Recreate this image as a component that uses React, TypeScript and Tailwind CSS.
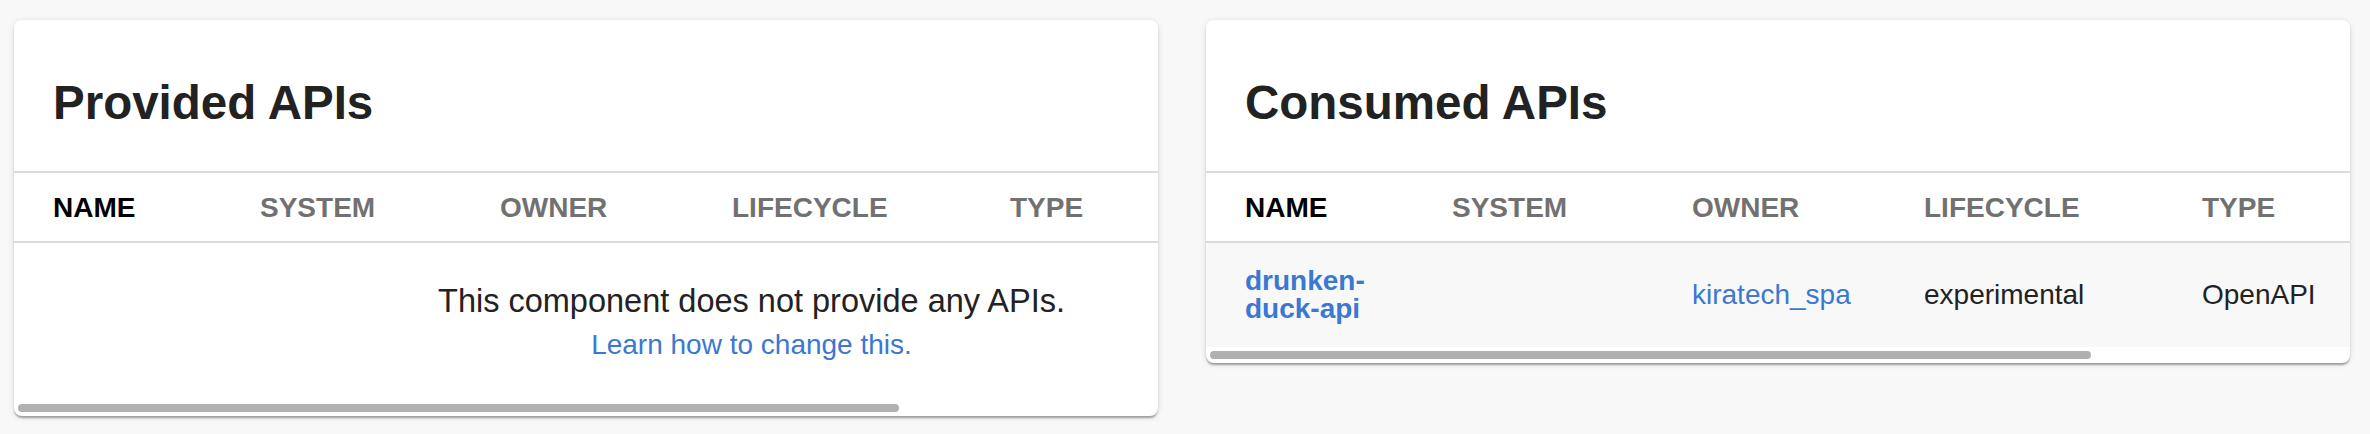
import React from 'react';

interface ApiRow {
  name: string;
  system: string;
  owner: string;
  lifecycle: string;
  type: string;
}

const columns = ['NAME', 'SYSTEM', 'OWNER', 'LIFECYCLE', 'TYPE'];

// column tracks sized so the table overflows the card, like the real scroll view
const gridCols = 'grid grid-cols-[207px_240px_232px_278px_518px]';

const HeaderRow: React.FC = () => (
  <div className={`${gridCols} border-y-2 border-[#dadada]`}>
    {columns.map((col, i) => (
      <div
        key={col}
        className={`pl-[39px] pt-[21px] pb-[19px] text-[28px] leading-[28px] font-bold ${
          i === 0 ? 'text-black' : 'text-[#717171]'
        }`}
      >
        {col}
      </div>
    ))}
  </div>
);

const Scrollbar: React.FC = () => (
  <div className="px-[4px] pt-[4px] pb-[4px]">
    <div className="h-[8px] w-[881px] rounded-full bg-[#b0b0b0]" />
  </div>
);

const ApiCard: React.FC<{ title: string; rows: ApiRow[]; emptyText: string }> = ({
  title,
  rows,
  emptyText,
}) => (
  <div className="w-[1144px] shrink-0 overflow-hidden rounded-[8px] bg-white shadow-[0_3px_2px_-1px_rgba(0,0,0,0.2),0_2px_2px_0_rgba(0,0,0,0.14),0_1px_6px_0_rgba(0,0,0,0.12)]">
    <div className="pl-[39px] pt-[59px] pb-[45px]">
      <h2 className="text-[47.5px] leading-[47px] font-bold text-[#222222]">{title}</h2>
    </div>
    <div className="overflow-hidden">
      <div className="w-[1475px]">
        <HeaderRow />
        {rows.length === 0 ? (
          <div className="flex flex-col items-center pt-[42px] pb-[41px]">
            <p className="text-[32.5px] leading-[33px] text-[#222222]">{emptyText}</p>
            <a className="mt-[13px] text-[28px] leading-[28px] text-[#3a78d2]">
              Learn how to change this.
            </a>
          </div>
        ) : (
          rows.map((row) => (
            <div key={row.name} className={`${gridCols} items-center bg-[#f8f8f8] text-[28px] leading-[28px]`}>
              <div className="py-[24px] pl-[39px] pr-[39px]">
                <a className="font-bold text-[#3a78d2] break-words">{row.name}</a>
              </div>
              <div className="pl-[39px] text-[#222222]">{row.system}</div>
              <div className="pl-[39px]">
                <a className="text-[#3a78d2]">{row.owner}</a>
              </div>
              <div className="pl-[39px] text-[#222222]">{row.lifecycle}</div>
              <div className="pl-[39px] text-[#222222]">{row.type}</div>
            </div>
          ))
        )}
      </div>
    </div>
    <Scrollbar />
  </div>
);

export default function App() {
  const consumed: ApiRow[] = [
    {
      name: 'drunken-duck-api',
      system: '',
      owner: 'kiratech_spa',
      lifecycle: 'experimental',
      type: 'OpenAPI',
    },
  ];

  return (
    <div className="h-[434px] w-[2370px] bg-[#f8f8f8] pl-[14px] pt-[20px] font-['Liberation_Sans',Arial,sans-serif]">
      <div className="flex items-start gap-[48px]">
        <ApiCard title="Provided APIs" rows={[]} emptyText="This component does not provide any APIs." />
        <ApiCard title="Consumed APIs" rows={consumed} emptyText="" />
      </div>
    </div>
  );
}
